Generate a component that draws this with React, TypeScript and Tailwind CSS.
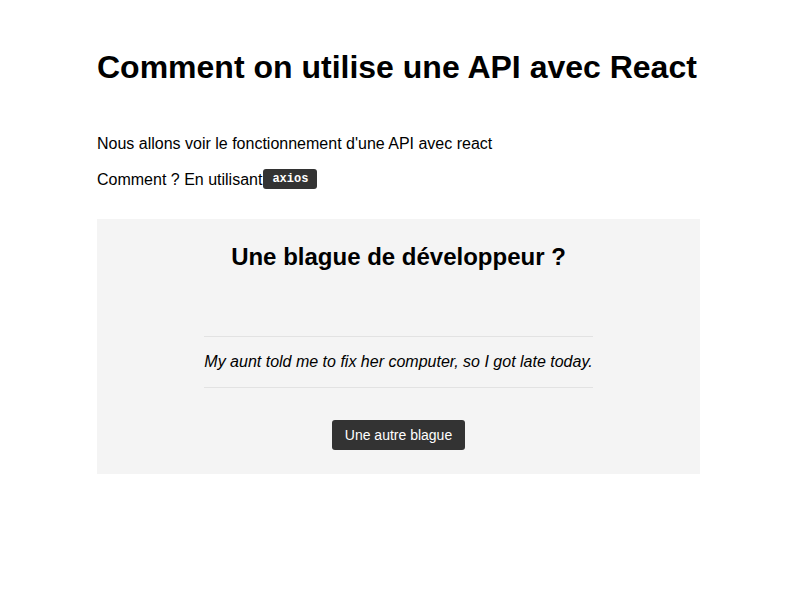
import React from 'react';

export default function App() {
  const joke = 'My aunt told me to fix her computer, so I got late today.';

  return (
    <div className="min-h-screen bg-white text-black font-['Liberation_Sans',Arial,sans-serif]">
      <div className="mx-auto w-[603px] pt-[48px]">
        <h1 className="text-[32px] leading-[38px] font-bold">Comment on utilise une API avec React</h1>

        <p className="mt-[48px] text-base leading-[19px]">
          Nous allons voir le fonctionnement d'une API avec react
        </p>
        <p className="mt-4 text-base leading-[19px] flex items-center">
          Comment ? En utilisant
          <code className="ml-px inline-block rounded-[3px] bg-[#333] px-[9px] h-5 leading-5 text-[12px] font-bold text-white font-['Liberation_Mono','Courier_New',monospace]">
            axios
          </code>
        </p>

        {/* joke card */}
        <section className="mt-[30px] bg-[#f4f4f4] pt-[24px] pb-[24px] flex flex-col items-center">
          <h2 className="text-[24px] leading-[28px] font-bold">Une blague de développeur ?</h2>
          <blockquote className="mt-[65px] border-y border-[#e2e2e2] py-[13px] text-base leading-6 italic">
            {joke}
          </blockquote>
          <button
            type="button"
            className="mt-[32px] h-[30px] rounded-[3px] bg-[#333] px-[13px] text-sm text-white"
          >
            Une autre blague
          </button>
        </section>
      </div>
    </div>
  );
}
